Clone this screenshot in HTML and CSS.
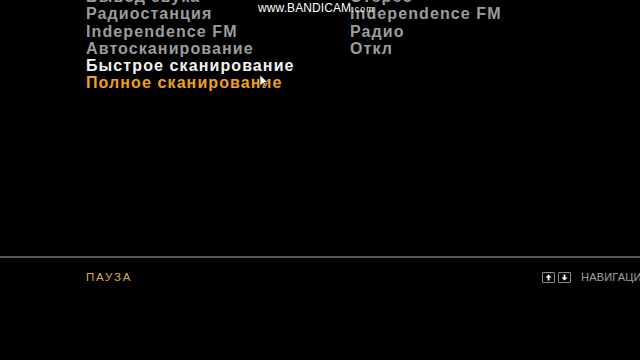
FILE: index.html
```html
<!DOCTYPE html>
<html lang="ru">
<head>
    <meta charset="UTF-8">
    <title>Аудио</title>
    <link rel="stylesheet" href="styles.css">
</head>
<body>
    <div class="screen">
        <div class="menu">
            <span class="item">Вывод звука</span>
            <span class="value">Стерео</span>
            <span class="item">Радиостанция</span>
            <span class="value">Independence FM</span>
            <span class="item">Independence FM</span>
            <span class="value">Радио</span>
            <span class="item">Автосканирование</span>
            <span class="value">Откл</span>
            <span class="item active">Быстрое сканирование</span>
            <span class="value"></span>
            <span class="item selected">Полное сканирование</span>
            <span class="value"></span>
        </div>

        <div class="watermark">www.BANDICAM<small>.com</small></div>

        <svg class="cursor" width="10" height="14" viewBox="0 0 10 14">
            <path d="M1 1 L1 12 L4 9 L6 13 L7.5 12.3 L5.5 8.5 L9 8.5 Z" fill="#fff" stroke="#222" stroke-width="0.8"/>
        </svg>
    </div>

    <div class="footer">
        <span class="pause">ПАУЗА</span>
        <div class="nav">
            <span class="key">
                <svg width="7" height="7" viewBox="0 0 7 7"><path d="M3.5 0.5 L6.5 3.5 L4.4 3.5 L4.4 6.5 L2.6 6.5 L2.6 3.5 L0.5 3.5 Z" fill="#fff"/></svg>
            </span>
            <span class="key">
                <svg width="7" height="7" viewBox="0 0 7 7"><path d="M3.5 6.5 L6.5 3.5 L4.4 3.5 L4.4 0.5 L2.6 0.5 L2.6 3.5 L0.5 3.5 Z" fill="#fff"/></svg>
            </span>
            <span class="nav-label">НАВИГАЦИЯ</span>
        </div>
    </div>
</body>
</html>
```

FILE: styles.css
```css
html, body {
    margin: 0;
    padding: 0;
    background-color: #000;
    overflow: hidden;
}

body {
    width: 640px;
    height: 360px;
    font-family: "Liberation Sans", Arial, sans-serif;
}

.screen {
    position: relative;
    height: 256px;
    overflow: hidden;
}

.menu {
    display: grid;
    grid-template-columns: 264px auto;
    grid-auto-rows: 17.3px;
    margin-top: -12px;
    padding-left: 86px;
    font-size: 16px;
    font-weight: bold;
    letter-spacing: 1.1px;
    line-height: 17.3px;
    white-space: nowrap;
    color: #9c9c9c;
}

.item.active {
    color: #f2f2f2;
}

.item.selected {
    color: #f0a024;
}

.watermark {
    position: absolute;
    left: 258px;
    top: 1px;
    font-size: 12px;
    color: #fff;
    letter-spacing: 0.1px;
}

.watermark small {
    font-size: 8.5px;
    letter-spacing: 1.2px;
}

.cursor {
    position: absolute;
    left: 259px;
    top: 74px;
}

.footer {
    border-top: 2px solid #555;
    height: 104px;
    display: grid;
    grid-template-columns: 456px auto;
    align-items: start;
    padding: 12px 0 0 86px;
    box-sizing: border-box;
    font-size: 11.5px;
    letter-spacing: 1.8px;
    white-space: nowrap;
    overflow: hidden;
}

.pause {
    color: #dcae52;
    line-height: 14px;
}

.nav {
    display: flex;
    align-items: center;
    gap: 3px;
    line-height: 14px;
}

.key {
    display: flex;
    align-items: center;
    justify-content: center;
    width: 11px;
    height: 9px;
    border: 1px solid #8a8a8a;
    border-radius: 1px;
}

.nav-label {
    margin-left: 7px;
    font-size: 11px;
    letter-spacing: 0.2px;
    color: #a0a0a0;
}
```
